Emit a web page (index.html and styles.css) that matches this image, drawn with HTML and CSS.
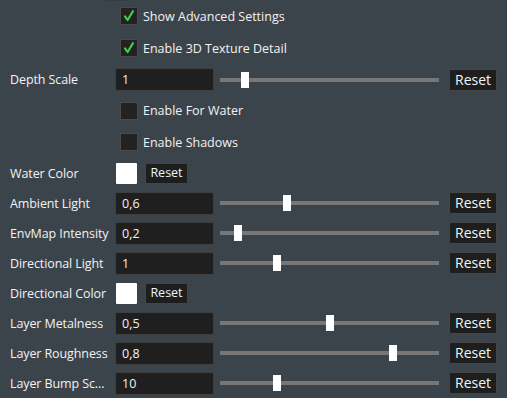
FILE: index.html
```html
<!DOCTYPE html>
<html lang="en">

<head>
  <meta charset="UTF-8">
  <title>Settings</title>
  <link rel="stylesheet" href="styles.css">
</head>

<body>
  <div class="top-edge"></div>
  <div class="panel">
    <!-- toggles -->
    <div class="row h32">
      <span class="label"></span>
      <label class="check on"><span class="box"><svg viewBox="0 0 18 18"><path d="M4.5 9.5 L7.5 13.5 L13.5 3.5"/></svg></span>Show Advanced Settings</label>
    </div>
    <div class="row h32">
      <span class="label"></span>
      <label class="check on"><span class="box"><svg viewBox="0 0 18 18"><path d="M4.5 9.5 L7.5 13.5 L13.5 3.5"/></svg></span>Enable 3D Texture Detail</label>
    </div>

    <div class="row h31">
      <span class="label">Depth Scale</span>
      <div class="field">1</div>
      <div class="slider"><div class="track"></div><div class="thumb" style="left:11.4%"></div></div>
      <button class="reset">Reset</button>
    </div>

    <div class="row h31">
      <span class="label"></span>
      <label class="check"><span class="box"></span>Enable For Water</label>
    </div>
    <div class="row h32">
      <span class="label"></span>
      <label class="check"><span class="box"></span>Enable Shadows</label>
    </div>

    <div class="row">
      <span class="label">Water Color</span>
      <span class="swatch"></span>
      <button class="reset small">Reset</button>
    </div>

    <div class="row">
      <span class="label">Ambient Light</span>
      <div class="field">0,6</div>
      <div class="slider"><div class="track"></div><div class="thumb" style="left:30.6%"></div></div>
      <button class="reset">Reset</button>
    </div>
    <div class="row">
      <span class="label">EnvMap Intensity</span>
      <div class="field">0,2</div>
      <div class="slider"><div class="track"></div><div class="thumb" style="left:8.2%"></div></div>
      <button class="reset">Reset</button>
    </div>
    <div class="row">
      <span class="label">Directional Light</span>
      <div class="field">1</div>
      <div class="slider"><div class="track"></div><div class="thumb" style="left:26%"></div></div>
      <button class="reset">Reset</button>
    </div>

    <div class="row">
      <span class="label">Directional Color</span>
      <span class="swatch"></span>
      <button class="reset small">Reset</button>
    </div>

    <div class="row">
      <span class="label">Layer Metalness</span>
      <div class="field">0,5</div>
      <div class="slider"><div class="track"></div><div class="thumb" style="left:50.2%"></div></div>
      <button class="reset">Reset</button>
    </div>
    <div class="row">
      <span class="label">Layer Roughness</span>
      <div class="field">0,8</div>
      <div class="slider"><div class="track"></div><div class="thumb" style="left:79%"></div></div>
      <button class="reset">Reset</button>
    </div>
    <div class="row">
      <span class="label">Layer Bump Sc...</span>
      <div class="field">10</div>
      <div class="slider"><div class="track"></div><div class="thumb" style="left:26%"></div></div>
      <button class="reset">Reset</button>
    </div>
  </div>
</body>

</html>
```

FILE: styles.css
```css
html, body {
  margin: 0;
  padding: 0;
  background: #3c444b;
  overflow: hidden;
}
body {
  font-family: "Open Sans", "Noto Sans", sans-serif;
  font-size: 12.5px;
  color: #f2f2f2;
  position: relative;
}
/* bit of a control cut off at the top */
.top-edge {
  position: absolute;
  top: 0;
  left: 106px;
  width: 22px;
  height: 1px;
  background: #353c42;
}
.panel {
  display: flex;
  flex-direction: column;
  padding-right: 10px;
}
.row {
  display: flex;
  align-items: center;
  height: 30px;
}
.h31 { height: 31px; }
.h32 { height: 32px; }

.label {
  width: 105px;
  padding-left: 10px;
  flex: none;
  white-space: nowrap;
  letter-spacing: -0.1px;
}

.check {
  display: flex;
  align-items: center;
  margin-left: 5px;
}
.check .box {
  width: 16px;
  height: 16px;
  border: 1px solid #4a4a4a;
  background: #222;
  margin-right: 5px;
  display: flex;
}
.check svg {
  width: 16px;
  height: 16px;
}
.check path {
  fill: none;
  stroke: #3dcf4b;
  stroke-width: 2.4;
  stroke-linecap: round;
  stroke-linejoin: round;
}

.field {
  width: 91px;
  height: 21px;
  line-height: 21px;
  padding-left: 6px;
  background: #1f1f1f;
  border: 1px solid #3e3e3e;
  border-radius: 2px;
  flex: none;
}

.slider {
  position: relative;
  flex: 1;
  height: 16px;
  margin: 0 10px 0 6px;
}
.track {
  position: absolute;
  left: 0;
  right: 0;
  top: 6px;
  height: 4px;
  background: #777;
}
.thumb {
  position: absolute;
  top: 0;
  width: 8px;
  height: 16px;
  margin-left: -4px;
  background: #fff;
}

.reset {
  width: 48px;
  height: 22px;
  padding: 0;
  background: #1e1e1e;
  border: 1px solid #454545;
  border-radius: 2px;
  color: #eaf6fa;
  font-family: "Open Sans", "Noto Sans", sans-serif;
  font-size: 14px;
  line-height: 18px;
}
.reset.small {
  width: 43px;
  height: 21px;
  font-size: 12.5px;
  margin-left: 8px;
}

.swatch {
  width: 21px;
  height: 21px;
  margin-left: 1px;
  background: #fff;
  border-radius: 1px;
}
```
